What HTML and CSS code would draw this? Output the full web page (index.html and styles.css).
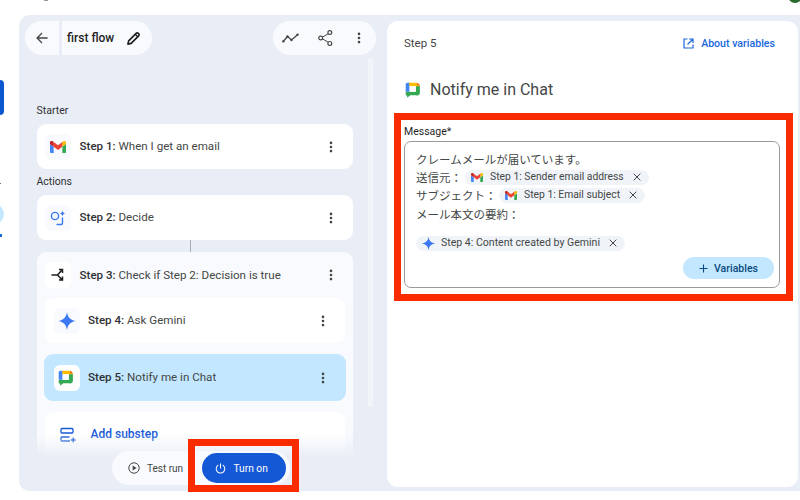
FILE: index.html
```html
<!DOCTYPE html>
<html lang="en">
<head>
<meta charset="utf-8">
<title>first flow</title>
<link rel="stylesheet" href="styles.css">
</head>
<body>
<svg class="defs" width="0" height="0" aria-hidden="true">
  <defs>
    <symbol id="gmail" viewBox="0 0 24 18">
      <path fill="#4285f4" d="M1.6 18H5.5V8.500L0 4.400V16.400C0 17.300.7 18 1.600 18Z"/>
      <path fill="#34a853" d="M18.500 18H22.400C23.300 18 24 17.300 24 16.400V4.400L18.500 8.500Z"/>
      <path fill="#fbbc04" d="M18.500 1.400V8.500L24 4.400V2.200C24 .2 21.700-1 20.100.2Z"/>
      <path fill="#ea4335" d="M5.500 8.500V1.400L12 6.300 18.500 1.400V8.500L12 13.400Z"/>
      <path fill="#c5221f" d="M0 2.200V4.400L5.500 8.500V1.400L3.900.2C2.300-1 0 .2 0 2.200Z"/>
    </symbol>
    <symbol id="chat" viewBox="0 0 24 24">
      <path fill="#34a853" d="M1 15V20.500L3 20.500V23.500L7.500 20H17.500C19 20 20 19 20 17.500V15Z"/>
      <path fill="#4285f4" d="M1 15V5C1 3.500 2 2.500 3.500 2.500H6.500V15Z"/>
      <path fill="#fbbc04" d="M6 2.500H17.500L21 6V8H15.500V7.500H6Z"/>
      <path fill="#ea4335" d="M17.500 2.500L21 6H17.500Z"/>
      <path fill="#34a853" d="M15.500 7.500H21V17C21 19 19.500 20 18 20H15.500Z"/>
      <path fill="#fff" d="M6.500 7.500H15.500V15H6.500Z"/>
    </symbol>
    <symbol id="spark" viewBox="0 0 24 24">
      <path fill="#3b78f2" d="M12 0C12.800 7 17 11.200 24 12 17 12.800 12.800 17 12 24 11.200 17 7 12.800 0 12 7 11.200 11.200 7 12 0Z"/>
    </symbol>
    <symbol id="dots" viewBox="0 0 24 24">
      <circle cx="12" cy="5" r="2.300"/><circle cx="12" cy="12" r="2.300"/><circle cx="12" cy="19" r="2.300"/>
    </symbol>
    <symbol id="close" viewBox="0 0 12 12">
      <path fill="none" stroke="#444746" stroke-width="1.500" d="M1 1L11 11M11 1L1 11"/>
    </symbol>
  </defs>
</svg>

<div class="page">
  <div class="rail">
    <div class="rail-blue"></div>
    <div class="rail-dot"></div>
    <div class="rail-round"></div>
    <div class="rail-mark"></div>
  </div>

  <div class="app">
    <section class="left">
      <header class="toolbar">
        <div class="pill-group">
          <button class="pill-back" aria-label="Back">
            <svg width="12" height="12" viewBox="0 0 14 14"><path fill="none" stroke="#444746" stroke-width="1.500" d="M13.500 7H1.500M7 1.200L1.300 7 7 12.800"/></svg>
          </button>
          <div class="pill-title">
            <span class="flow-name">first flow</span>
            <svg width="15" height="15" viewBox="0 0 16 16"><path fill="none" stroke="#1f1f1f" stroke-width="1.700" stroke-linejoin="round" d="M2 14L2.800 10.500 10.800 2.500C11.500 1.800 12.500 1.800 13.200 2.500L13.500 2.800C14.200 3.500 14.200 4.500 13.500 5.200L5.500 13.200Z"/><path fill="none" stroke="#1f1f1f" stroke-width="1.400" d="M9.800 3.500L12.500 6.200"/></svg>
          </div>
        </div>
        <div class="pill-actions">
          <svg width="17" height="10" viewBox="0 0 17 10"><path fill="none" stroke="#444746" stroke-width="1.300" d="M1.200 8.500L5.500 3.500 9.500 7 15.800 1.500"/><circle cx="1.400" cy="8.400" r="1.200" fill="#444746"/><circle cx="5.500" cy="3.500" r="1.200" fill="#444746"/><circle cx="9.500" cy="7" r="1.200" fill="#444746"/><circle cx="15.600" cy="1.600" r="1.200" fill="#444746"/></svg>
          <svg width="15" height="16" viewBox="0 0 15 16"><path fill="none" stroke="#444746" stroke-width="1" d="M11.800 2.800L3 8 11.800 13.200"/><g fill="#fff" stroke="#444746" stroke-width="1.200"><circle cx="11.800" cy="2.600" r="1.900"/><circle cx="2.700" cy="8" r="1.900"/><circle cx="11.800" cy="13.400" r="1.900"/></g></svg>
          <svg class="dots" width="14" height="14" fill="#444746"><use href="#dots"/></svg>
        </div>
      </header>

      <div class="flow">
        <h2 class="flow-label first">Starter</h2>
        <div class="card">
          <span class="tile"><svg width="16" height="12"><use href="#gmail"/></svg></span>
          <span class="step"><b>Step 1:</b> When I get an email</span>
          <svg class="dots" width="14" height="14" fill="#444746"><use href="#dots"/></svg>
        </div>
        <h2 class="flow-label">Actions</h2>
        <div class="card">
          <span class="tile">
            <svg width="16" height="16" viewBox="0 0 16 16"><circle cx="5" cy="6" r="3.600" fill="none" stroke="#3b78f2" stroke-width="1.400"/><path fill="none" stroke="#3b78f2" stroke-width="1.400" d="M12.500 7.500V13C12.500 14 12 14.500 11 14.500H6.500"/><path fill="#3b78f2" d="M12.500.500C12.700 2.300 13.700 3.300 15.500 3.500 13.700 3.700 12.700 4.700 12.500 6.500 12.300 4.700 11.300 3.700 9.500 3.500 11.300 3.300 12.300 2.300 12.500.500Z"/></svg>
          </span>
          <span class="step"><b>Step 2:</b> Decide</span>
          <svg class="dots" width="14" height="14" fill="#444746"><use href="#dots"/></svg>
        </div>
        <div class="connector"></div>
        <div class="group">
          <div class="group-head">
            <span class="tile tile-white">
              <svg width="14" height="14" viewBox="0 0 14 14"><path fill="none" stroke="#1f1f1f" stroke-width="1.500" d="M.500 7H6.500L10.500 2.500M8 1.500H11.500V5M6.500 7L10.800 11.500M11.500 8.500V12H8"/></svg>
            </span>
            <span class="step"><b>Step 3:</b> Check if Step 2: Decision is true</span>
            <svg class="dots" width="14" height="14" fill="#444746"><use href="#dots"/></svg>
          </div>
          <div class="card sub">
            <span class="tile"><svg width="18" height="18"><use href="#spark"/></svg></span>
            <span class="step"><b>Step 4:</b> Ask Gemini</span>
            <svg class="dots" width="14" height="14" fill="#444746"><use href="#dots"/></svg>
          </div>
          <div class="card sub selected">
            <span class="tile tile-white"><svg width="17" height="17"><use href="#chat"/></svg></span>
            <span class="step"><b>Step 5:</b> Notify me in Chat</span>
            <svg class="dots" width="14" height="14" fill="#444746"><use href="#dots"/></svg>
          </div>
          <div class="card sub add">
            <svg width="16" height="16" viewBox="0 0 16 16"><g fill="none" stroke="#1558d6" stroke-width="1.300"><rect x="1" y="1.500" width="12" height="4.500" rx="1"/><path d="M9.500 10H2C1.400 10 1 10.400 1 11V13C1 13.600 1.400 14 2 14H10"/><path d="M13.200 10.500V15.500M10.800 13H15.600"/></g></svg>
            <span class="add-text">Add substep</span>
          </div>
        </div>
      </div>

      <div class="scrollbar"></div>
      <div class="fade"></div>
      <div class="run-bar">
        <button class="test-run">
          <svg width="12" height="12" viewBox="0 0 12 12"><circle cx="6" cy="6" r="5.200" fill="none" stroke="#444746" stroke-width="1"/><path fill="#444746" d="M4.600 3.500L8.600 6 4.600 8.500Z"/></svg>
          Test run
        </button>
        <button class="turn-on">
          <svg width="11" height="11" viewBox="0 0 12 12"><path fill="none" stroke="#fff" stroke-width="1.100" stroke-linecap="round" d="M6 .8V5.500M3.400 2.400A4.700 4.700 0 1 0 8.600 2.400"/></svg>
          Turn on
        </button>
      </div>
    </section>

    <section class="right">
      <div class="right-head">
        <span class="step-name">Step 5</span>
        <a class="about">
          <svg width="11" height="11" viewBox="0 0 11 11"><path fill="none" stroke="#1a68dc" stroke-width="1.200" d="M4.500 1H1V10H10V6.500M6 1H10V5M10 1L4.500 6.500"/></svg>
          About variables
        </a>
      </div>
      <div class="right-title">
        <svg width="17" height="17"><use href="#chat"/></svg>
        <h1>Notify me in Chat</h1>
      </div>
      <div class="field-label">Message*</div>
      <div class="field">
        <div class="line">クレームメールが届いています。</div>
        <div class="line">送信元：<span class="chip gap1"><svg width="12" height="9"><use href="#gmail"/></svg><span>Step 1: Sender email address</span><svg class="chip-x" width="8" height="8"><use href="#close"/></svg></span></div>
        <div class="line">サブジェクト：<span class="chip gap2"><svg width="12" height="9"><use href="#gmail"/></svg><span>Step 1: Email subject</span><svg class="chip-x" width="8" height="8"><use href="#close"/></svg></span></div>
        <div class="line">メール本文の要約：</div>
        <div class="line-gap"></div>
        <div class="line"><span class="chip chip-first"><svg width="13" height="13"><use href="#spark"/></svg><span>Step 4: Content created by Gemini</span><svg class="chip-x" width="8" height="8"><use href="#close"/></svg></span></div>
        <div class="field-foot">
          <button class="variables">
            <svg width="9" height="9" viewBox="0 0 9 9"><path fill="none" stroke="#0b4a7d" stroke-width="1.100" d="M4.500 .5V8.500M.5 4.500H8.500"/></svg>
            Variables
          </button>
        </div>
      </div>
    </section>
  </div>
</div>

<div class="avatar"></div>
<div class="top-mark"></div>
<div class="note note-message"></div>
<div class="note note-turn"></div>
</body>
</html>
```
FILE: styles.css
```css
* { box-sizing: border-box; }
html, body { margin: 0; width: 800px; height: 500px; overflow: hidden; background: #fff; }
body { font-family: Roboto, "Noto Sans CJK JP", sans-serif; color: #1f1f1f; position: relative; }
button { font: inherit; border: 0; padding: 0; }
.defs { position: absolute; }

.page { display: flex; padding-top: 15px; height: 500px; }

.rail { width: 19px; flex: none; overflow: hidden; }
.rail-blue { width: 3.500px; height: 35px; margin-top: 65px; background: #0b57d0; border-radius: 0 5px 5px 0; }
.rail-dot { width: 1px; height: 1px; margin-top: 68px; background: #777; }
.rail-round { width: 20px; height: 20px; margin: 20px 0 0 -16.500px; background: #c2e7ff; border-radius: 50%; }
.rail-mark { width: 2px; height: 3px; margin-top: 10px; background: #1a68dc; }

.app { flex: 1; height: 476px; background: #e9eef6; border-radius: 11px 0 0 11px; display: flex; }

.left { width: 368px; height: 476px; flex: none; position: relative; overflow: hidden; border-radius: 11px 0 0 11px; }
.toolbar { display: flex; justify-content: space-between; padding: 6px 11px 0 6px; }
.pill-group { display: flex; gap: 3px; }
.pill-back { width: 34px; height: 34px; background: #f8fafd; border-radius: 17px 0 0 17px; display: flex; align-items: center; justify-content: center; }
.pill-title { width: 90px; height: 34px; background: #f8fafd; border-radius: 0 17px 17px 0; display: flex; align-items: center; gap: 12px; padding-left: 5px; }
.flow-name { font-size: 12px; font-weight: 500; }
.pill-actions { width: 103px; height: 34px; background: #f8fafd; border-radius: 17px; display: flex; align-items: center; justify-content: space-between; padding: 0 10px 0 9px; }

.flow { padding: 0 0 0 17.500px; width: 334px; }
.flow-label { margin: 6px 0; font-size: 10.500px; line-height: 14px; font-weight: 400; color: #303134; height: 14px; }
.flow-label.first { margin-top: 49px; }
.card { height: 45px; background: #fff; border-radius: 9px; display: flex; align-items: center; padding: 0 15px 0 8.500px; }
.tile { width: 26px; height: 26px; flex: none; background: #f8fafd; border-radius: 6px; display: flex; align-items: center; justify-content: center; }
.tile-white { background: #fff; }
.step { flex: 1; margin-left: 8.500px; font-size: 11.600px; line-height: 14px; margin-bottom: 1px; color: #444746; white-space: nowrap; }
.step b { font-weight: 500; color: #303134; }
.dots { flex: none; display: block; }
.connector { width: 1px; height: 12px; margin-left: 153px; background: #a8abb0; }

.group { background: #f8fafd; border-radius: 9px; height: 240px; padding: 10px 8.500px 0; }
.group-head { height: 26px; display: flex; align-items: center; padding-right: 6.500px; }
.sub { padding-right: 15px; margin-top: 10px; height: 45px; }
.selected { background: #c2e7ff; height: 47px; margin: 11px -1px; padding-left: 9.500px; padding-right: 16px; }
.selected + .add { margin-top: 11px; }
.add { height: 60px; padding: 15px 0 0 15px; background: #fff; align-items: flex-start; }
.add-text { margin-left: 14.500px; font-size: 12px; line-height: 15px; font-weight: 500; color: #1558d6; }

.scrollbar { position: absolute; left: 349px; top: 43px; width: 5px; height: 349px; background: #f1f4f9; border-radius: 3px; }
.fade { position: absolute; left: 0; right: 0; bottom: 0; height: 57px; background: linear-gradient(to bottom, rgba(233,238,246,0), #e9eef6 40%); }

.run-bar { position: absolute; left: 93px; top: 436px; width: 178px; height: 34px; background: #f8fafd; border-radius: 17px; display: flex; align-items: center; justify-content: space-between; padding: 0 4px 0 16px; }
.test-run { display: flex; align-items: center; gap: 7px; background: none; font-size: 10px; color: #444746; }
.turn-on { width: 84px; height: 30px; border-radius: 15px; background: #1558d6; color: #fff; font-size: 10.200px; display: flex; align-items: center; gap: 7.500px; padding-left: 13px; }

.right { width: 411px; height: 466px; margin-top: 5.500px; background: #fff; border-radius: 11px; padding: 0 17px; }
.right-head { display: flex; justify-content: space-between; align-items: center; height: 44px; padding-top: 1px; padding-right: 6px; }
.step-name { font-size: 11.500px; color: #444746; }
.about { display: flex; align-items: center; gap: 7px; font-size: 10.600px; font-weight: 500; color: #1a68dc; }
.right-title { display: flex; align-items: center; gap: 8px; height: 22px; margin-top: 13.500px; padding-left: 1px; }
.right-title h1 { margin: 0; font-size: 16px; font-weight: 400; color: #444746; }
.field-label { margin-top: 24.500px; font-size: 10.500px; line-height: 13px; color: #1f1f1f; }
.field { margin-top: 3.500px; width: 376px; height: 147px; border: 1px solid #9a9a9a; border-radius: 7px; padding: 8px 5px 0 11px; font-size: 11.500px; color: #444746; font-family: "Noto Sans CJK JP", Roboto, sans-serif; }
.line { height: 18.200px; line-height: 18.200px; display: flex; align-items: center; white-space: nowrap; }
.line-gap { height: 11.500px; }
.chip { height: 14.500px; background: #f0f4f9; border-radius: 8px; display: inline-flex; align-items: center; font-family: Roboto, sans-serif; font-size: 10.350px; color: #444746; padding-left: 6px; padding-right: 8px; }
.chip > span { margin-left: 7px; }
.chip-x { margin-left: 9px; }
.gap1 { margin-left: 3px; }
.gap2 { margin-left: 2.500px; }
.chip-first { font-size: 10.550px; }
.chip-first > span { margin-left: 6px; }
.field-foot { display: flex; justify-content: flex-end; margin-top: 4.500px; }
.variables { width: 91px; height: 22.500px; border-radius: 11px; background: #c2e7ff; color: #0b4a7d; font-size: 10.500px; font-weight: 500; font-family: Roboto, sans-serif; display: flex; align-items: center; justify-content: center; gap: 6px; }

.avatar { position: absolute; right: -2px; top: -11px; width: 14px; height: 14px; border-radius: 50%; background: #2a6a2e; }
.top-mark { position: absolute; left: 44px; top: 0; width: 4px; height: 1px; background: #999; }
.note { position: absolute; border: 7px solid #fb2b00; pointer-events: none; }
.note-message { left: 393.500px; top: 113px; width: 399px; height: 188px; }
.note-turn { left: 188px; top: 439px; width: 111px; height: 53px; }
```
